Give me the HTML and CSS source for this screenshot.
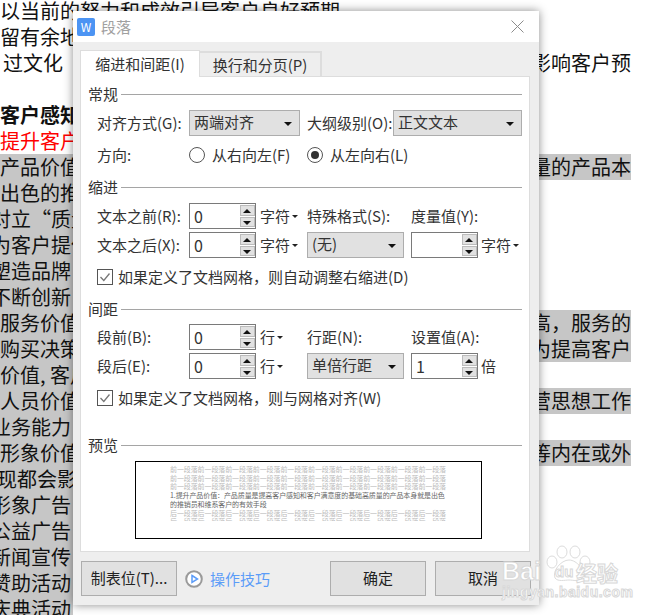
FILE: index.html
```html
<!doctype html>
<html lang="zh-CN">
<head>
	<meta charset="UTF-8">
	<title>段落</title>
	<link rel="stylesheet" href="styles.css">
</head>
<body>
<div class="doc">
	<div class="line"><span>以当前的努力和成效引导客户良好预期</span></div>
	<div class="line"><span>留有余地</span></div>
	<div class="line line-gap"><span>过文化</span><span>影响客户预</span></div>
	<div class="line"></div>
	<div class="line line-bold"><span>客户感知</span></div>
	<div class="line line-red"><span>提升客户</span></div>
	<div class="line mark full"><span>产品价值</span><span>量的产品本</span></div>
	<div class="line mark"><span>出色的推</span></div>
	<div class="line mark cut"><span>对立“质量</span></div>
	<div class="line mark cut"><span>为客户提供</span></div>
	<div class="line mark cut"><span>塑造品牌</span></div>
	<div class="line mark cut"><span>不断创新</span></div>
	<div class="line mark full"><span>服务价值</span><span>高，服务的</span></div>
	<div class="line mark full"><span>购买决策</span><span>为提高客户</span></div>
	<div class="line mark"><span>价值, 客户</span></div>
	<div class="line mark full"><span>人员价值</span><span>营思想工作</span></div>
	<div class="line mark cut"><span>业务能力</span></div>
	<div class="line mark full"><span>形象价值</span><span>等内在或外</span></div>
	<div class="line mark nudge"><span>现都会影响</span></div>
	<div class="line mark cut"><span>形象广告</span></div>
	<div class="line mark cut"><span>公益广告</span></div>
	<div class="line mark cut"><span>新闻宣传</span></div>
	<div class="line mark cut"><span>赞助活动</span></div>
	<div class="line mark cut"><span>庆典活动</span></div>
</div>

<div class="dialog">
	<div class="titlebar">
		<div class="logo">W</div>
		<div class="title">段落</div>
		<svg class="close" width="13" height="13" viewBox="0 0 13 13"><path d="M0.5 0.5L12.5 12.5M12.5 0.5L0.5 12.5" stroke="#8c8c8c" fill="none"/></svg>
	</div>

	<div class="tabs">
		<div class="tab tab-on">缩进和间距(I)</div>
		<div class="tab">换行和分页(P)</div>
	</div>

	<div class="panel">
		<div class="legend legend-first"><span>常规</span></div>
		<div class="row">
			<div class="lab lab-first">对齐方式(G):</div>
			<div class="select w111">两端对齐</div>
			<div class="lab lab-level">大纲级别(O):</div>
			<div class="select w129">正文文本</div>
		</div>
		<div class="row">
			<div class="lab lab-first">方向:</div>
			<div class="radio-item"><i class="radio"></i>从右向左(F)</div>
			<div class="radio-item"><i class="radio radio-on"></i>从左向右(L)</div>
		</div>

		<div class="legend"><span>缩进</span></div>
		<div class="row">
			<div class="lab lab-first">文本之前(R):</div>
			<div class="spin"><b>0</b><div class="arrows"><i class="up"></i><i class="down"></i></div></div>
			<div class="unit">字符<i class="caret"></i></div>
			<div class="lab lab-special">特殊格式(S):</div>
			<div class="lab">度量值(Y):</div>
		</div>
		<div class="row row-near">
			<div class="lab lab-first">文本之后(X):</div>
			<div class="spin"><b>0</b><div class="arrows"><i class="up"></i><i class="down"></i></div></div>
			<div class="unit">字符<i class="caret"></i></div>
			<div class="select w97">(无)</div>
			<div class="spin spin-next"><b></b><div class="arrows"><i class="up"></i><i class="down"></i></div></div>
			<div class="unit unit-end">字符<i class="caret"></i></div>
		</div>
		<div class="row">
			<div class="check"><i class="box"><svg width="14" height="14" viewBox="0 0 14 14"><path d="M2.5 7L5.8 10.5L11.5 3.5" stroke="#777" stroke-width="1.3" fill="none"/></svg></i>如果定义了文档网格，则自动调整右缩进(D)</div>
		</div>

		<div class="legend legend-tight"><span>间距</span></div>
		<div class="row">
			<div class="lab lab-first">段前(B):</div>
			<div class="spin"><b>0</b><div class="arrows"><i class="up"></i><i class="down"></i></div></div>
			<div class="unit">行<i class="caret"></i></div>
			<div class="lab lab-special">行距(N):</div>
			<div class="lab">设置值(A):</div>
		</div>
		<div class="row row-near">
			<div class="lab lab-first">段后(E):</div>
			<div class="spin"><b>0</b><div class="arrows"><i class="up"></i><i class="down"></i></div></div>
			<div class="unit">行<i class="caret"></i></div>
			<div class="select w97">单倍行距</div>
			<div class="spin spin-next"><b>1</b><div class="arrows"><i class="up"></i><i class="down"></i></div></div>
			<div class="unit unit-end">倍</div>
		</div>
		<div class="row">
			<div class="check"><i class="box"><svg width="14" height="14" viewBox="0 0 14 14"><path d="M2.5 7L5.8 10.5L11.5 3.5" stroke="#777" stroke-width="1.3" fill="none"/></svg></i>如果定义了文档网格，则与网格对齐(W)</div>
		</div>

		<div class="legend legend-last"><span>预览</span></div>
		<div class="preview">
			<div class="pv-text">
				<div class="pv-gray">前一段落前一段落前一段落前一段落前一段落前一段落前一段落前一段落前一段落前一段落</div>
				<div class="pv-gray">前一段落前一段落前一段落前一段落前一段落前一段落前一段落前一段落前一段落前一段落</div>
				<div class="pv-gray">前一段落前一段落前一段落前一段落前一段落前一段落前一段落前一段落前一段落前一段落</div>
				<div>1.提升产品价值：产品质量是提高客户感知和客户满意度的基础高质量的产品本身就是出色</div>
				<div>的推销员和维系客户的有效手段</div>
				<div class="pv-gray">后一段落后一段落后一段落后一段落后一段落后一段落后一段落后一段落后一段落后一段落</div>
				<div class="pv-gray">后一段落后一段落后一段落后一段落后一段落后一段落后一段落后一段落后一段落后一段落</div>
			</div>
		</div>
	</div>

	<div class="footer">
		<div class="btn">制表位(T)...</div>
		<div class="tip">
			<svg width="18" height="18" viewBox="0 0 18 18"><circle cx="9" cy="9" r="7.8" fill="#fff" stroke="#9a9a9a" stroke-width="2"/><path d="M7 5.5L12.5 9L7 12.5Z" fill="none" stroke="#5b9cf8" stroke-width="1.5"/></svg>
			<span>操作技巧</span>
		</div>
		<div class="btn btn-ok">确定</div>
		<div class="btn">取消</div>
	</div>
</div>

<div class="mark-logo">
	<svg class="paw" width="50" height="38" viewBox="0 0 50 38">
		<g fill="#fff" fill-opacity=".75" stroke="#dcdcdc">
			<ellipse cx="8" cy="17" rx="5" ry="6"/>
			<ellipse cx="18" cy="7" rx="5" ry="6"/>
			<ellipse cx="31" cy="7" rx="5" ry="6"/>
			<ellipse cx="41" cy="17" rx="5" ry="6"/>
			<path d="M25 15C33 15 42 26 38 33C35 37 29 35 25 35C21 35 14 37 11 33C8 26 17 15 25 15Z"/>
		</g>
	</svg>
	<div class="wm-main"><span>Bai</span><span class="wm-du">du</span><span class="wm-cn">经验</span></div>
	<div class="wm-url">jingyan.baidu.com</div>
</div>
</body>
</html>
```

FILE: styles.css
```css
*{
	box-sizing:border-box;
}
html,body{
	height:100%;
}
body{
	margin:0;
	overflow:hidden;
	background-color:#fff;
	color:#222;
	font-family:"Noto Sans CJK SC","Liberation Sans",sans-serif;
}
i{
	font-style:normal;
}

/*doc behind the dialog*/
.doc{
	margin-top:-2px;
}
.line{
	display:flex;
	justify-content:space-between;
	height:26px;
	line-height:26px;
	font-size:20px;
	color:#111;
	white-space:nowrap;
	overflow:hidden;
}
.line-gap{
	width:631px;
	padding-left:3px;
}
.line-bold{
	font-weight:bold;
}
.line-red{
	color:#f00;
}
.mark{
	width:73px;
	background-color:#c6c6c6;
}
.full{
	width:631px;
}
.cut span:first-child{
	margin-left:-9px;
}
.nudge span:first-child{
	margin-left:-3px;
}

/*dialog*/
.dialog{
	position:absolute;
	left:73px;
	top:11px;
	width:466px;
	height:594px;
	background-color:#eee;
	box-shadow:0 0 9px rgba(0,0,0,.45);
	font-size:15px;
	color:#333;
}
.titlebar{
	display:flex;
	align-items:center;
	height:31px;
	padding-left:4px;
	background-color:#fff;
}
.logo{
	width:18px;
	height:18px;
	border-radius:2px;
	background-color:#4c94f3;
	color:#fff;
	font-size:12px;
	line-height:18px;
	text-align:center;
}
.title{
	margin-left:6px;
	color:#a0a0a0;
	line-height:18px;
}
.close{
	margin-left:auto;
	margin-right:15px;
}
.tabs{
	display:flex;
	height:27px;
	margin-top:8px;
	padding-left:7px;
}
.tab{
	width:122px;
	height:26px;
	margin-top:1px;
	border:2px solid #ddd;
	border-bottom:0;
	border-left:0;
	text-align:center;
	line-height:23px;
}
.tab-on{
	position:relative;
	z-index:1;
	width:120px;
	height:27px;
	margin-top:0;
	border:1px solid #ddd;
	border-bottom:0;
	background-color:#fff;
	line-height:25px;
}
.panel{
	width:450px;
	height:476px;
	margin-top:-1px;
	margin-left:7px;
	padding:7px 7px 0;
	border:1px solid #ddd;
	background-color:#fff;
}
.legend{
	display:flex;
	align-items:center;
	height:20px;
	margin-top:9px;
	margin-bottom:6px;
	line-height:18px;
}
.legend:after{
	content:"";
	flex:1;
	height:1px;
	margin-left:3px;
	background-color:#a5a5a5;
}
.legend-first{
	margin-top:0;
}
.legend-tight{
	margin-bottom:5px;
}
.legend-last{
	margin-top:24px;
}
.row{
	display:flex;
	align-items:center;
	height:26px;
	margin-bottom:6px;
	padding-left:9px;
	white-space:nowrap;
	line-height:24px;
}
.row-near{
	margin-top:-3px;
}
.lab,.select,.spin,.unit,.radio,.box{
	flex:none;
}
.lab-first{
	width:92px;
}
.lab-level{
	width:86px;
	margin-left:7px;
}
.lab-special{
	width:104px;
}

/*select*/
.select{
	position:relative;
	height:26px;
	padding-left:4px;
	border:1px solid #adadad;
	background-color:#e1e1e1;
	line-height:22px;
}
.select:after{
	content:"";
	position:absolute;
	right:7px;
	top:11px;
	border-top:4px solid #111;
	border-left:4px solid transparent;
	border-right:4px solid transparent;
}
.w111{
	width:111px;
}
.w129{
	width:129px;
}
.w97{
	width:97px;
}

/*radio*/
.radio-item{
	display:flex;
	align-items:center;
	width:118px;
}
.radio{
	position:relative;
	width:16px;
	height:16px;
	margin-right:7px;
	border:1px solid #555;
	border-radius:50%;
}
.radio-on:after{
	content:"";
	position:absolute;
	left:3px;
	top:3px;
	width:8px;
	height:8px;
	border-radius:50%;
	background-color:#333;
}

/*spin*/
.spin{
	display:flex;
	justify-content:space-between;
	width:67px;
	height:26px;
	padding:1px 0 1px 4px;
	border:1px solid #7a7a7a;
	background-color:#fff;
}
.spin b{
	font-weight:normal;
	line-height:22px;
	font-size:16px;
}
.spin-next{
	margin-left:7px;
}
.arrows{
	display:flex;
	flex-direction:column;
	gap:1px;
	width:15px;
}
.arrows i{
	position:relative;
	flex:1;
	border:1px solid #bbb;
	background-color:#e1e1e1;
}
.arrows i:after{
	content:"";
	position:absolute;
	left:2px;
	top:3px;
	border-left:4px solid transparent;
	border-right:4px solid transparent;
}
.up:after{
	border-bottom:4px solid #111;
}
.down:after{
	border-top:4px solid #111;
}
.unit{
	display:flex;
	align-items:center;
	width:51px;
	padding-left:4px;
}
.unit-end{
	padding-left:3px;
}
.caret{
	width:0;
	margin-left:2px;
	border-top:3px solid #222;
	border-left:3px solid transparent;
	border-right:3px solid transparent;
}

/*checkbox*/
.check{
	display:flex;
	align-items:center;
}
.box{
	display:flex;
	width:16px;
	height:16px;
	margin-right:5px;
	border:1px solid #555;
}

/*preview*/
.preview{
	width:347px;
	height:78px;
	margin-left:47px;
	padding:3px 0 0 34px;
	border:1px solid #000;
	background-color:#fff;
}
.pv-text{
	width:290px;
	height:56px;
	overflow:hidden;
	font-size:7px;
	line-height:8.7px;
	letter-spacing:-.1px;
	color:#666;
	white-space:nowrap;
}
.pv-gray{
	color:#bbb;
}

/*footer*/
.footer{
	display:flex;
	align-items:center;
	gap:9px;
	padding:9px 8px 0;
}
.btn{
	width:96px;
	height:35px;
	border:1px solid #adadad;
	background-color:#e1e1e1;
	text-align:center;
	line-height:32px;
	color:#222;
}
.btn-ok{
	margin-left:auto;
}
.tip{
	display:flex;
	align-items:center;
	gap:7px;
	margin-left:-1px;
	color:#5b9cf8;
	line-height:20px;
}

/*watermark*/
.mark-logo{
	position:absolute;
	left:502px;
	top:545px;
	width:118px;
	height:55px;
	color:#fff;
	-webkit-text-stroke:1px #d8d8d8;
	white-space:nowrap;
}
.paw{
	position:absolute;
	left:42px;
	top:0;
}
.wm-main{
	position:absolute;
	left:0;
	top:12px;
	font-family:"Liberation Sans",sans-serif;
	font-size:25px;
	font-weight:bold;
	line-height:28px;
}
.wm-du{
	position:absolute;
	left:53px;
	top:6px;
	font-size:15px;
	line-height:18px;
}
.wm-cn{
	position:absolute;
	left:74px;
	top:2px;
	font-family:"Noto Sans CJK SC",sans-serif;
	font-size:21px;
	line-height:26px;
}
.wm-url{
	position:absolute;
	left:0;
	top:39px;
	font-family:"Liberation Sans",sans-serif;
	font-size:14px;
	line-height:16px;
	font-weight:bold;
	letter-spacing:.5px;
}
```
